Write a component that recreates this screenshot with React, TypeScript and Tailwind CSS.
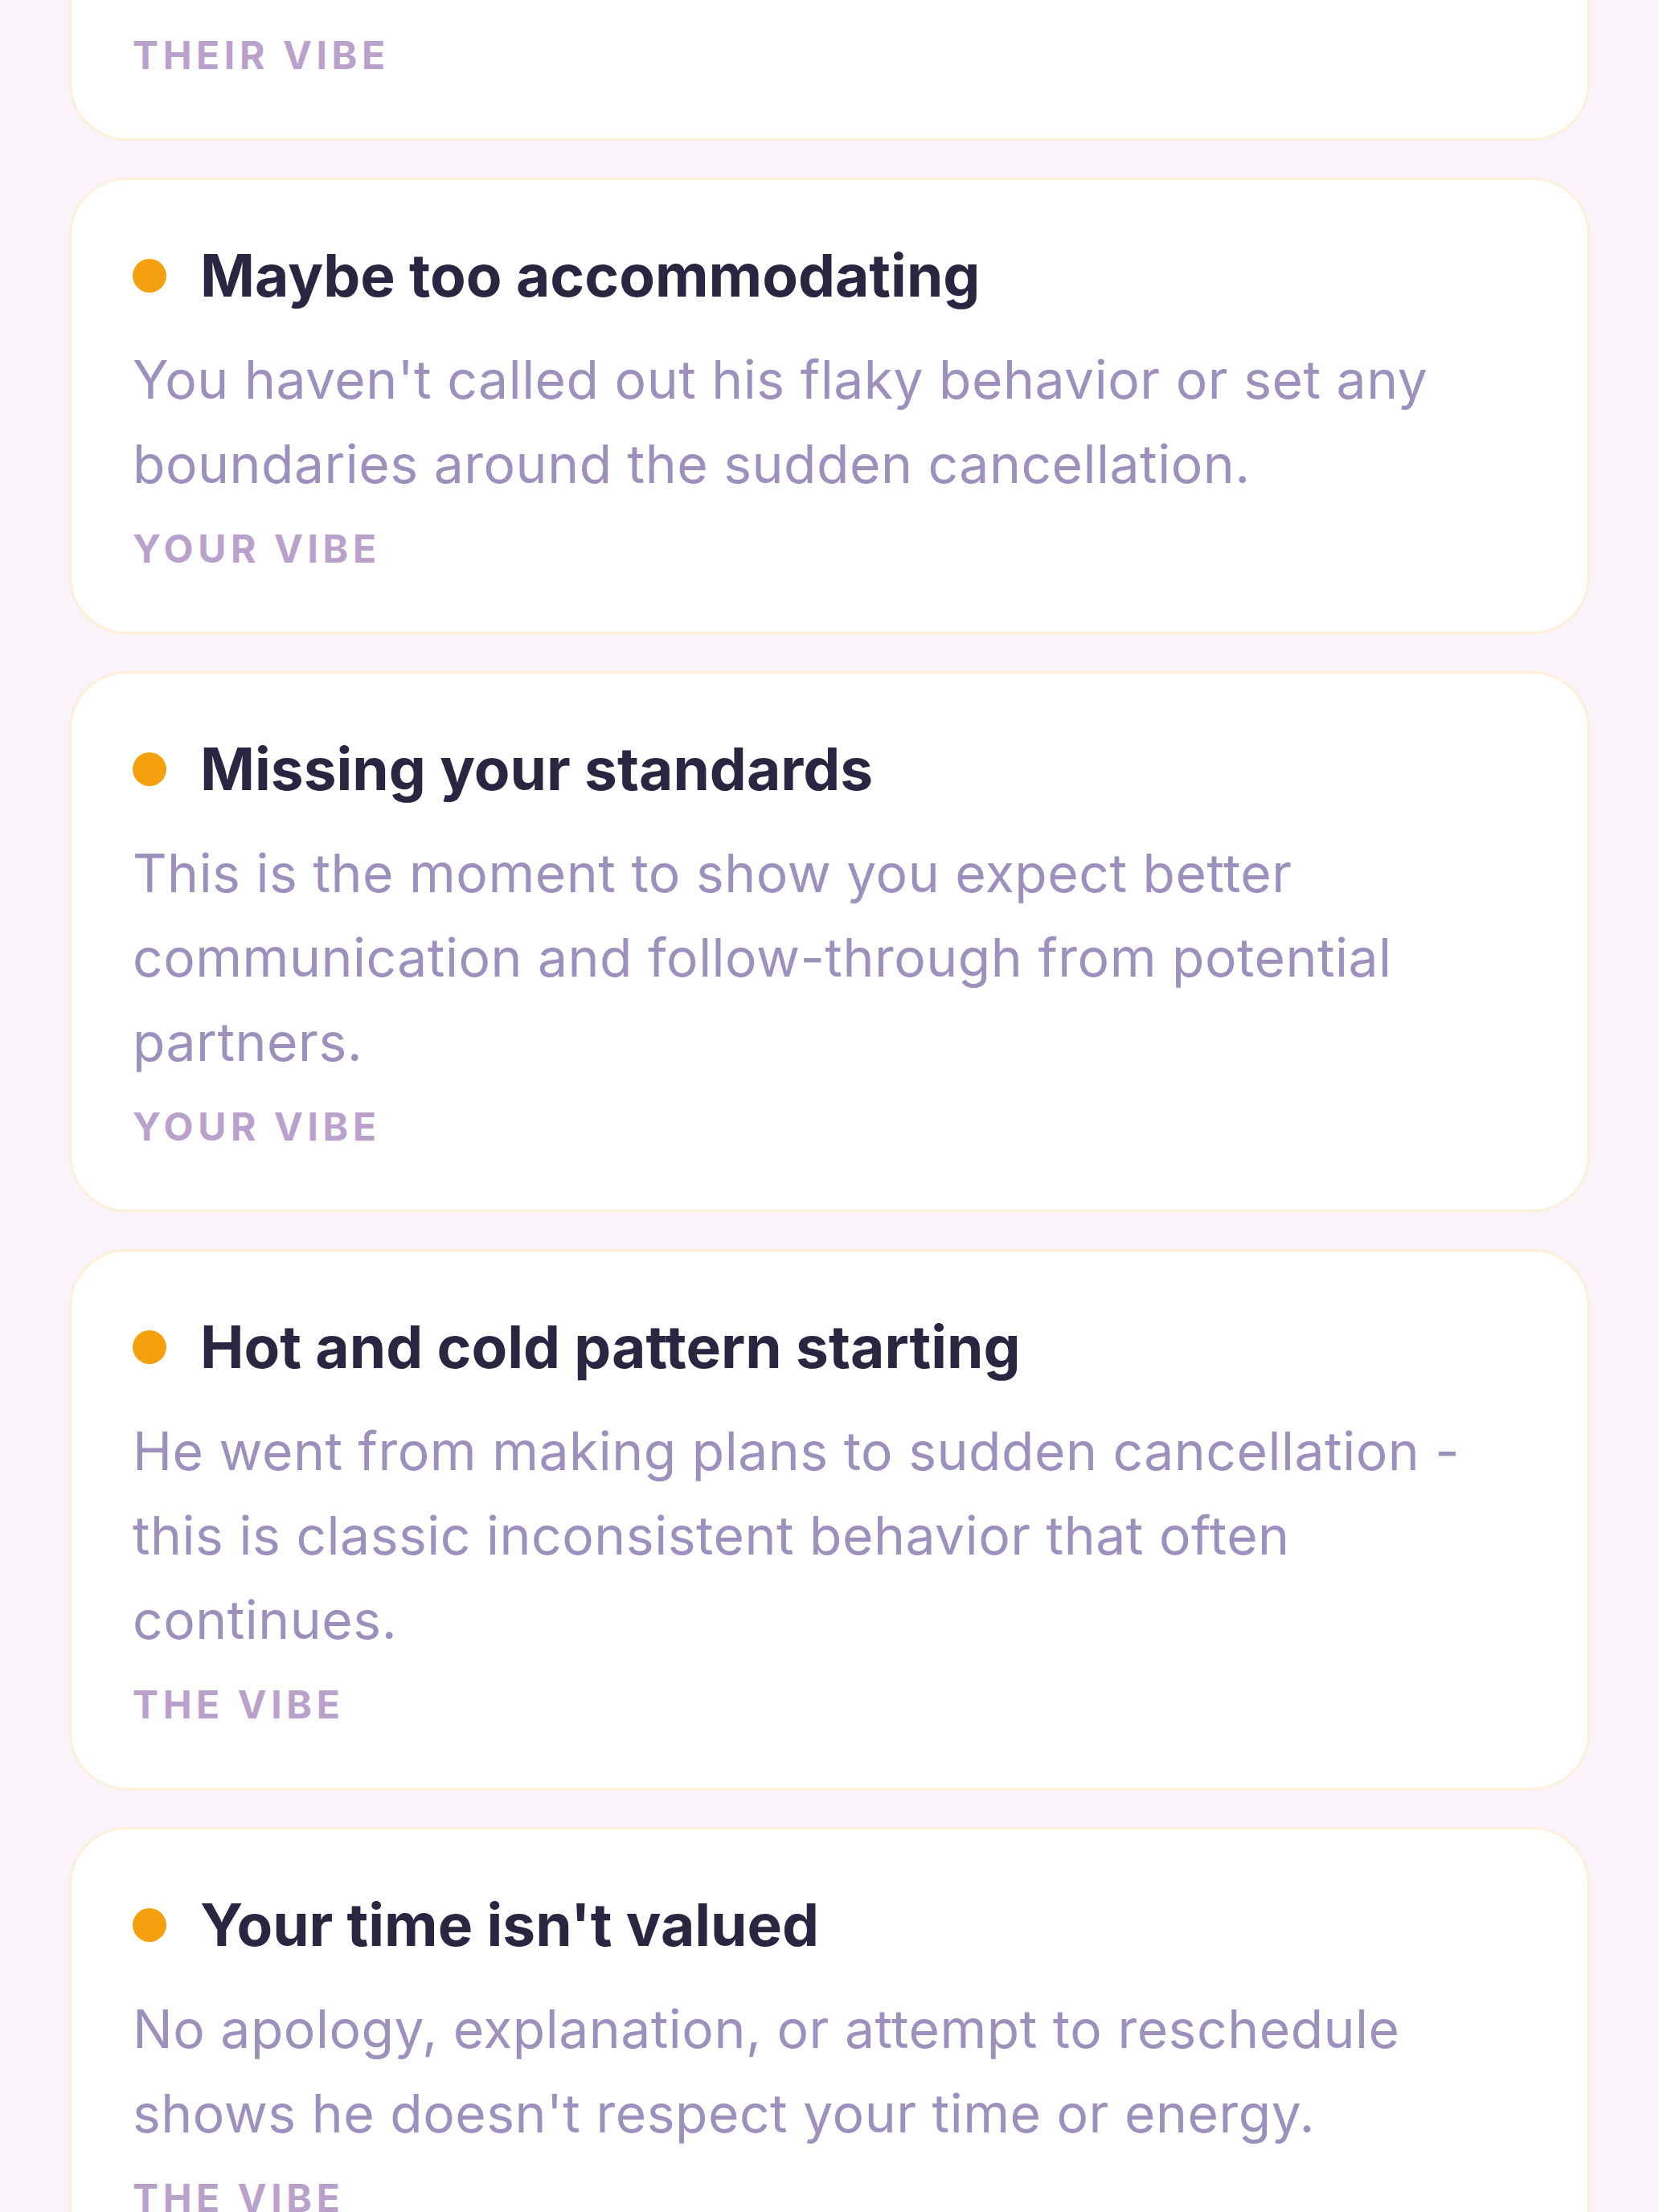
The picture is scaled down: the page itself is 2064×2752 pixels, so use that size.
import React from "react";

type Insight = {
    title?: string;
    body?: string;
    tag: string;
};

const INSIGHTS: Insight[] = [
    {
        title: "Maybe too accommodating",
        body: "You haven't called out his flaky behavior or set any boundaries around the sudden cancellation.",
        tag: "Your vibe",
    },
    {
        title: "Missing your standards",
        body: "This is the moment to show you expect better communication and follow-through from potential partners.",
        tag: "Your vibe",
    },
    {
        title: "Hot and cold pattern starting",
        body: "He went from making plans to sudden cancellation - this is classic inconsistent behavior that often continues.",
        tag: "The vibe",
    },
    {
        title: "Your time isn't valued",
        body: "No apology, explanation, or attempt to reschedule shows he doesn't respect your time or energy.",
        tag: "The vibe",
    },
];

function Tag({ label }: { label: string }) {
    return (
        <div className="text-[48px] leading-[72px] font-bold uppercase tracking-[5.6px] text-[#b9a1cc]">
            {label}
        </div>
    );
}

function InsightCard({ item }: { item: Insight }) {
    return (
        <div className="bg-white border-[3px] border-[#fdefd8] rounded-[72px] px-[76px] pt-[76px] pb-[67px]">
            {/* Title row with dot */}
            <div className="flex items-center gap-[42px]">
                <span className="w-[42px] h-[42px] rounded-full bg-[#f4a00f] shrink-0" />
                <h3 className="text-[73px] leading-[85px] font-bold text-[#2a2541]">
                    {item.title}
                </h3>
            </div>
            <p className="mt-[35px] text-[66px] leading-[105px] tracking-[0.5px] text-[#9d90bd]">{item.body}</p>
            <div className="mt-[17px]">
                <Tag label={item.tag} />
            </div>
        </div>
    );
}

export default function App() {
    return (
        <div
            className="w-full h-[2752px] overflow-hidden bg-[#faf3fa]"
            style={{ fontFamily: "Inter, 'Noto Sans', sans-serif" }}
        >
            <div className="flex flex-col gap-[46px] px-[86px]">
                {/* Card scrolled partly out of view */}
                <div className="bg-white border-[3px] border-t-0 border-[#fdefd8] rounded-b-[72px] px-[76px] pt-[33px] pb-[67px]">
                    <Tag label="Their vibe" />
                </div>
                {INSIGHTS.map((item) => (
                    <InsightCard key={item.title} item={item} />
                ))}
            </div>
        </div>
    );
}
